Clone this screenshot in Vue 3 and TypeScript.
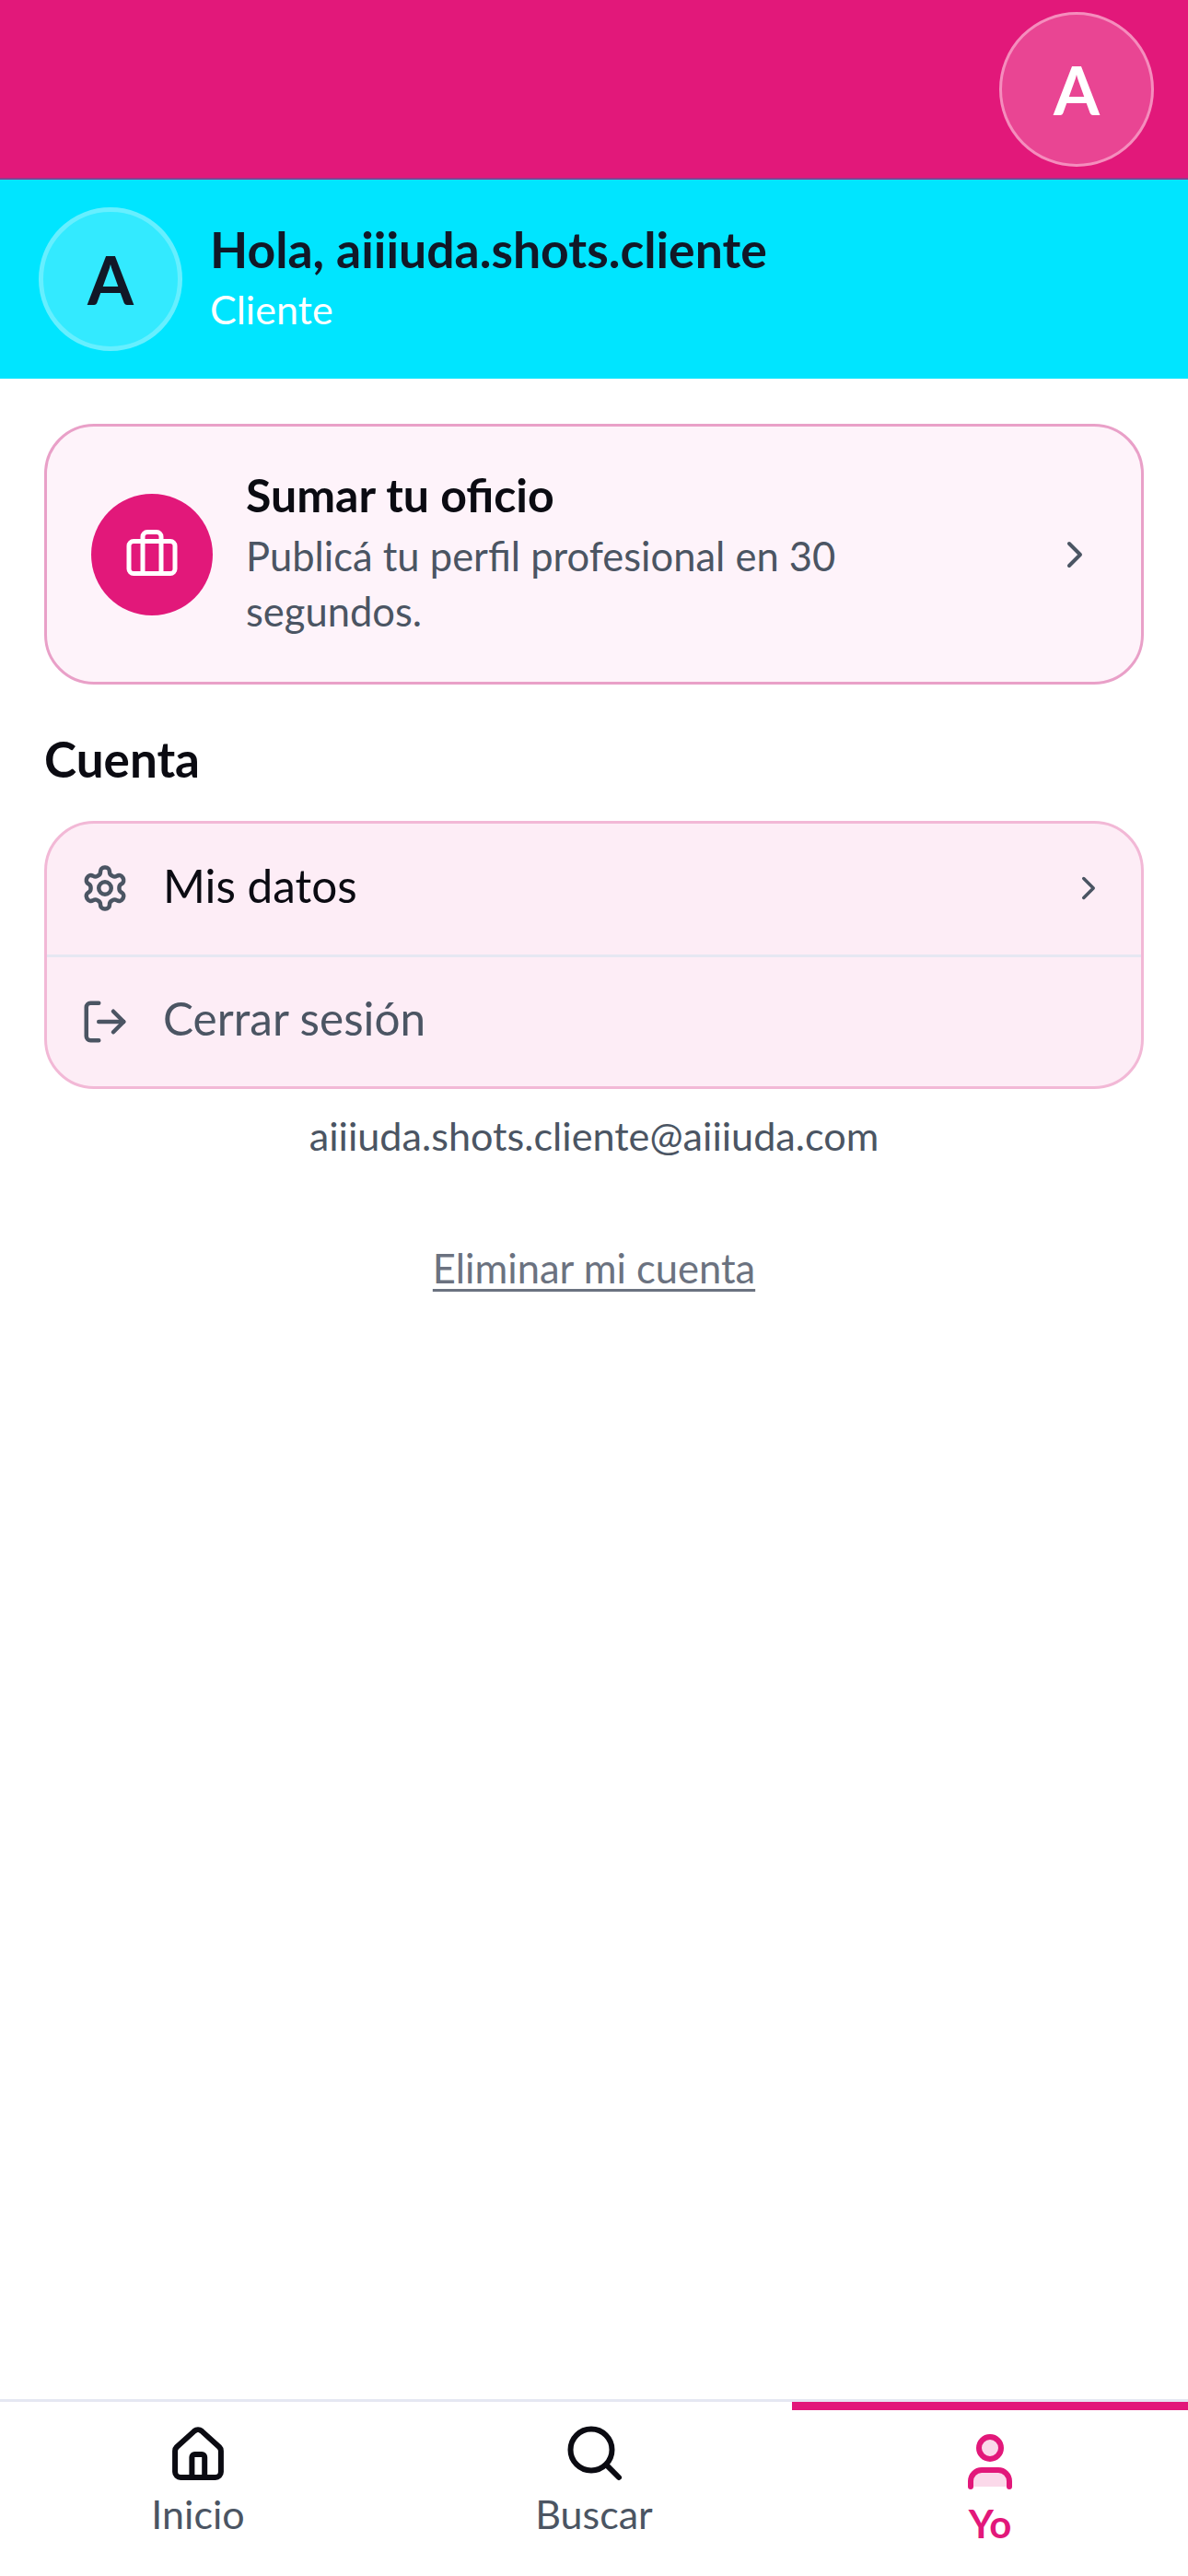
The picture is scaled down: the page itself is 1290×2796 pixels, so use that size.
<script setup lang="ts">
const tabs = [
  { key: "home", label: "Inicio", active: false },
  { key: "search", label: "Buscar", active: false },
  { key: "user", label: "Yo", active: true },
];
</script>

<template>
  <div class="page">
    <header class="topbar">
      <div class="topAvatar">A</div>
    </header>

    <section class="hello">
      <div class="helloAvatar">A</div>
      <div class="helloText">
        <div class="helloName">Hola, aiiiuda.shots.cliente</div>
        <div class="helloRole">Cliente</div>
      </div>
    </section>

    <main class="content">
      <div class="promo">
        <div class="promoIcon">
          <svg class="icon briefcase" viewBox="0 0 24 24">
            <rect x="2" y="7" width="20" height="14" rx="2" />
            <path d="M16 21V5a2 2 0 0 0-2-2h-4a2 2 0 0 0-2 2v16" />
          </svg>
        </div>
        <div class="promoText">
          <div class="promoTitle">Sumar tu oficio</div>
          <div class="promoDesc">Publicá tu perfil profesional en 30<br />segundos.</div>
        </div>
        <svg class="icon chevron" viewBox="0 0 24 24"><path d="m9 18 6-6-6-6" /></svg>
      </div>

      <h2 class="sectionTitle">Cuenta</h2>

      <div class="menu">
        <div class="menuRow">
          <svg class="icon menuIcon" viewBox="0 0 24 24">
            <path d="M12.22 2h-.44a2 2 0 0 0-2 2v.18a2 2 0 0 1-1 1.73l-.43.25a2 2 0 0 1-2 0l-.15-.08a2 2 0 0 0-2.73.73l-.22.38a2 2 0 0 0 .73 2.73l.15.1a2 2 0 0 1 1 1.72v.51a2 2 0 0 1-1 1.74l-.15.09a2 2 0 0 0-.73 2.73l.22.38a2 2 0 0 0 2.73.73l.15-.08a2 2 0 0 1 2 0l.43.25a2 2 0 0 1 1 1.73V20a2 2 0 0 0 2 2h.44a2 2 0 0 0 2-2v-.18a2 2 0 0 1 1-1.73l.43-.25a2 2 0 0 1 2 0l.15.08a2 2 0 0 0 2.73-.73l.22-.39a2 2 0 0 0-.73-2.73l-.15-.08a2 2 0 0 1-1-1.74v-.5a2 2 0 0 1 1-1.74l.15-.09a2 2 0 0 0 .73-2.73l-.22-.38a2 2 0 0 0-2.73-.73l-.15.08a2 2 0 0 1-2 0l-.43-.25a2 2 0 0 1-1-1.73V4a2 2 0 0 0-2-2z" />
            <circle cx="12" cy="12" r="3" />
          </svg>
          <span class="menuLabel">Mis datos</span>
          <svg class="icon chevronSmall" viewBox="0 0 24 24"><path d="m9 18 6-6-6-6" /></svg>
        </div>
        <div class="menuRow">
          <svg class="icon menuIcon" viewBox="0 0 24 24">
            <path d="M9 21H5a2 2 0 0 1-2-2V5a2 2 0 0 1 2-2h4" />
            <path d="m16 17 5-5-5-5" />
            <path d="M21 12H9" />
          </svg>
          <span class="menuLabel muted">Cerrar sesión</span>
        </div>
      </div>

      <p class="email">aiiiuda.shots.cliente@aiiiuda.com</p>
      <a class="remove">Eliminar mi cuenta</a>
    </main>

    <nav class="tabbar">
      <div v-for="tab in tabs" :key="tab.key" class="tab" :class="{ active: tab.active }">
        <svg class="icon tabIcon" viewBox="0 0 24 24">
          <template v-if="tab.key === 'home'">
            <path d="M4.3 10 10.7 4.2a2 2 0 0 1 2.6 0L19.7 10a2 2 0 0 1 .6 1.4V19a2 2 0 0 1-2 2H5.7a2 2 0 0 1-2-2v-7.6A2 2 0 0 1 4.3 10z" />
            <path d="M9.8 21v-7.3a1 1 0 0 1 1-1h2.6a1 1 0 0 1 1 1V21" />
          </template>
          <template v-else-if="tab.key === 'search'">
            <circle cx="11" cy="11" r="7.5" />
            <path d="m21 21-4.35-4.35" />
          </template>
          <template v-else>
            <circle cx="12" cy="7" r="4" class="tint" />
            <path d="M5 21v-2a4 4 0 0 1 4-4h6a4 4 0 0 1 4 4v2" class="tint" />
          </template>
        </svg>
        <span class="tabLabel">{{ tab.label }}</span>
      </div>
    </nav>
  </div>
</template>

<style>
html,
body {
  margin: 0;
  background: #ffffff;
}
</style>

<style scoped>
.page {
  width: 1290px;
  height: 2796px;
  display: flex;
  flex-direction: column;
  font-family: "Lato", "Noto Sans", sans-serif;
  color: #111827;
}

.icon {
  display: block;
  flex: none;
  fill: none;
  stroke: currentColor;
  stroke-width: 2;
  stroke-linecap: round;
  stroke-linejoin: round;
}

.topbar {
  height: 193px;
  background: #e2187a;
  border-bottom: 2px solid #8a3f8f;
  display: flex;
  justify-content: flex-end;
  align-items: center;
  padding-right: 37px;
}

.topAvatar {
  width: 168px;
  height: 168px;
  box-sizing: border-box;
  border-radius: 50%;
  border: 3px solid #f58dbd;
  background: #e94593;
  color: #ffffff;
  font-size: 72px;
  font-weight: 700;
  display: flex;
  align-items: center;
  justify-content: center;
}

.hello {
  height: 216px;
  background: #00e5ff;
  display: flex;
  align-items: center;
  padding-left: 42px;
  gap: 30px;
}

.helloAvatar {
  width: 156px;
  height: 156px;
  box-sizing: border-box;
  border-radius: 50%;
  border: 5px solid #66efff;
  background: #33eaff;
  color: #111827;
  font-size: 72px;
  font-weight: 700;
  display: flex;
  align-items: center;
  justify-content: center;
}

.helloText {
  padding-bottom: 4px;
}

.helloName {
  font-size: 53.5px;
  line-height: 66px;
  font-weight: 700;
}

.helloRole {
  margin-top: 3px;
  font-size: 43px;
  line-height: 60px;
  color: #ffffff;
}

.content {
  flex: 1;
  padding: 49px 48px 0;
  display: flex;
  flex-direction: column;
}

.promo {
  height: 283px;
  box-sizing: border-box;
  border: 3px solid #e9a0c8;
  border-radius: 54px;
  background: #fef3fa;
  display: flex;
  align-items: center;
  padding: 0 45px 0 48px;
}

.promoIcon {
  width: 132px;
  height: 132px;
  border-radius: 50%;
  background: #e2187a;
  color: #ffffff;
  display: flex;
  align-items: center;
  justify-content: center;
  flex: none;
  margin-right: 36px;
}

.briefcase {
  width: 60px;
  height: 60px;
  margin-top: -4px;
}

.promoText {
  flex: 1;
  padding-bottom: 10px;
}

.promoTitle {
  font-size: 50px;
  line-height: 72px;
  font-weight: 700;
  color: #0b0b12;
}

.promoDesc {
  font-size: 43.5px;
  line-height: 60px;
  color: #4b5563;
}

.chevron {
  width: 48px;
  height: 48px;
  color: #4b5563;
  margin-right: 3px;
}

.sectionTitle {
  margin: 48px 0 0;
  height: 100px;
  font-size: 53px;
  line-height: 66px;
  font-weight: 700;
  color: #0b0b12;
}

.menu {
  height: 291px;
  box-sizing: border-box;
  border: 3px solid #f2b8d6;
  border-radius: 54px;
  background: #fdedf6;
  overflow: hidden;
}

.menuRow {
  height: 142px;
  box-sizing: border-box;
  display: flex;
  align-items: center;
  padding: 0 36px 3px;
}

.menuRow + .menuRow {
  height: 143px;
  padding-bottom: 0;
  border-top: 3px solid #e5e7f2;
}

.menuIcon {
  width: 54px;
  height: 54px;
  color: #4b5563;
  margin-right: 36px;
}

.menuLabel {
  flex: 1;
  margin-top: -6px;
  font-size: 49.5px;
  line-height: 72px;
  color: #0b0b12;
}

.menuLabel.muted {
  margin-top: -9px;
  color: #4b5563;
}

.chevronSmall {
  width: 42px;
  height: 42px;
  color: #4b5563;
}

.email {
  margin: 20px 0 0;
  text-align: center;
  font-size: 43.2px;
  line-height: 60px;
  color: #4b5563;
}

.remove {
  margin-top: 84px;
  align-self: center;
  font-size: 43.5px;
  line-height: 60px;
  color: #6b7280;
  text-decoration: underline;
  text-underline-offset: 6px;
  text-decoration-thickness: 3px;
}

.tabbar {
  height: 192px;
  box-sizing: border-box;
  border-top: 3px solid #e5e7f2;
  display: grid;
  grid-template-columns: repeat(3, 1fr);
}

.tab {
  display: flex;
  flex-direction: column;
  align-items: center;
  padding-top: 19px;
  color: #4b5563;
}

.tab.active {
  border-top: 9px solid #e2187a;
  padding-top: 20px;
  color: #e2187a;
}

.tabIcon {
  width: 72px;
  height: 72px;
  color: #0b0b12;
}

.tab.active .tabIcon {
  color: #e2187a;
}

.tint {
  fill: #fbd9ea;
}

.tabLabel {
  margin-top: 1px;
  font-size: 43px;
  line-height: 60px;
}

.tab.active .tabLabel {
  font-size: 42px;
  font-weight: 700;
}
</style>
